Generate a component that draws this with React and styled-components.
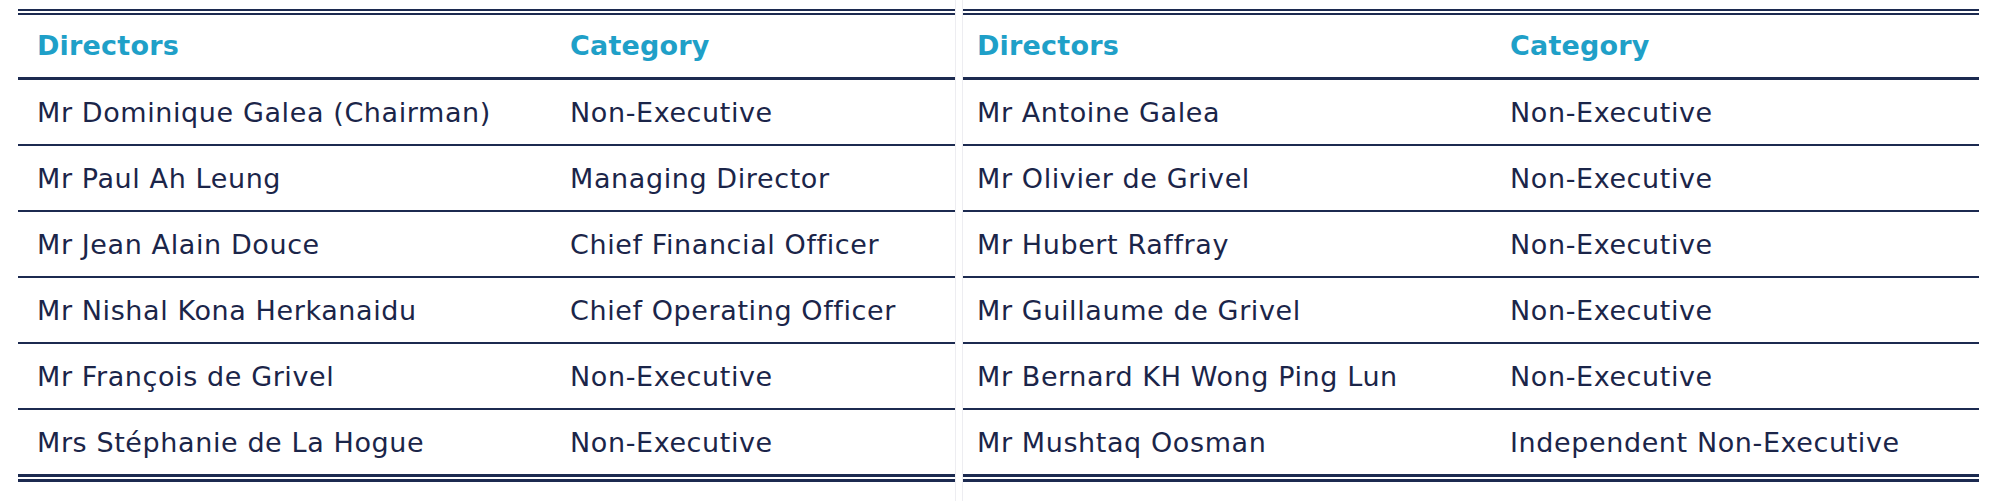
import React from 'react';
import styled, { createGlobalStyle } from 'styled-components';

const leftBoard = [
  ['Mr Dominique Galea (Chairman)', 'Non-Executive'],
  ['Mr Paul Ah Leung', 'Managing Director'],
  ['Mr Jean Alain Douce', 'Chief Financial Officer'],
  ['Mr Nishal Kona Herkanaidu', 'Chief Operating Officer'],
  ['Mr François de Grivel', 'Non-Executive'],
  ['Mrs Stéphanie de La Hogue', 'Non-Executive'],
];

const rightBoard = [
  ['Mr Antoine Galea', 'Non-Executive'],
  ['Mr Olivier de Grivel', 'Non-Executive'],
  ['Mr Hubert Raffray', 'Non-Executive'],
  ['Mr Guillaume de Grivel', 'Non-Executive'],
  ['Mr Bernard KH Wong Ping Lun', 'Non-Executive'],
  ['Mr Mushtaq Oosman', 'Independent Non-Executive'],
];

const DirectorsTable = ({ rows, pad }) => (
  <Table>
    <HeadRow>
      <HeadCell $pad={pad}>Directors</HeadCell>
      <HeadCell $pad={pad}>Category</HeadCell>
    </HeadRow>
    {rows.map(([name, category]) => (
      <Row key={name}>
        <Cell $pad={pad}>{name}</Cell>
        <Cell $pad={pad}>{category}</Cell>
      </Row>
    ))}
  </Table>
);

const App = () => (
  <>
    <GlobalStyle />
    <Page>
      <LeftColumn>
        <DirectorsTable rows={leftBoard} pad={19} />
      </LeftColumn>
      <RightColumn>
        <DirectorsTable rows={rightBoard} pad={14} />
      </RightColumn>
    </Page>
  </>
);

export default App;

// region STYLES

const navy = '#1c2a50';
const ink = '#1b2549';
const teal = '#1fa0c8';

const GlobalStyle = createGlobalStyle`
  html, body {
    margin: 0;
    padding: 0;
    background: #ffffff;
  }

  body {
    font-family: "DejaVu Sans", "Liberation Sans", sans-serif;
    color: ${ink};
  }
`;

const Page = styled.div`
  display: flex;
  gap: 6px;
  height: 501px;
  overflow: hidden;
`;

const LeftColumn = styled.div`
  width: 937px;
  padding-left: 18px;
  border-right: 1px solid #ededf1;
`;

const RightColumn = styled.div`
  flex: 1;
  padding-right: 21px;
  border-left: 1px solid #ededf1;
`;

const Table = styled.div`
  margin-top: 9px;
  border-top: 6px double ${navy};
  border-bottom: 8px double ${navy};
`;

const HeadRow = styled.div`
  display: grid;
  grid-template-columns: 533px 1fr;
  height: 62px;
  border-bottom: 3px solid ${navy};
`;

const Row = styled.div`
  display: grid;
  grid-template-columns: 533px 1fr;
  height: 64px;
  border-bottom: 2px solid ${navy};

  &:last-child {
    border-bottom: 0;
  }
`;

const HeadCell = styled.div`
  display: flex;
  align-items: center;
  padding-left: ${(p) => p.$pad}px;
  padding-bottom: 2px;
  font-size: 27px;
  font-weight: 700;
  letter-spacing: 0.2px;
  color: ${teal};
  white-space: nowrap;
`;

const Cell = styled.div`
  display: flex;
  align-items: center;
  padding-left: ${(p) => p.$pad}px;
  font-size: 27px;
  letter-spacing: 0.6px;
  color: ${ink};
  white-space: nowrap;
`;

// endregion
